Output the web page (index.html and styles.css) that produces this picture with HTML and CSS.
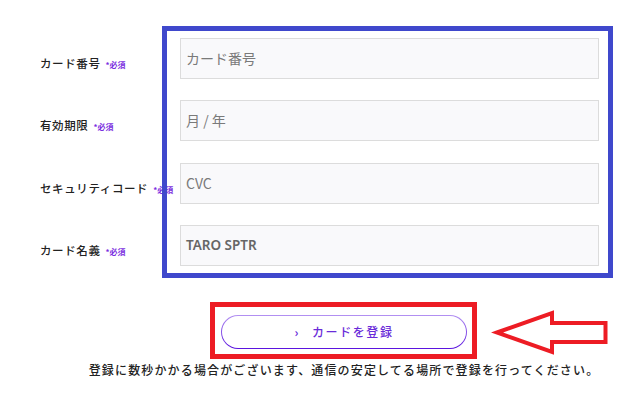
FILE: index.html
```html
<!DOCTYPE html>
<html lang="ja">
<head>
<meta charset="utf-8">
<link rel="stylesheet" href="styles.css">
</head>
<body>
<div class="page">
  <form class="card-form">
    <div class="row">
      <label class="label">カード番号<span class="req">*必須</span></label>
      <div class="field placeholder">カード番号</div>
    </div>
    <div class="row">
      <label class="label">有効期限<span class="req">*必須</span></label>
      <div class="field placeholder">月 / 年</div>
    </div>
    <div class="row">
      <label class="label">セキュリティコード<span class="req">*必須</span></label>
      <div class="field placeholder">CVC</div>
    </div>
    <div class="row">
      <label class="label">カード名義<span class="req">*必須</span></label>
      <div class="field value">TARO SPTR</div>
    </div>
  </form>
  <div class="actions">
    <button type="button" class="submit"><span class="chev">›</span>カードを登録</button>
    <p class="note">登録に数秒かかる場合がございます、通信の安定してる場所で登録を行ってください。</p>
  </div>
</div>
<div class="mark-blue"></div>
<div class="mark-red"></div>
<svg class="arrow" width="120" height="50" viewBox="490 306 120 50">
  <polygon points="497,332.5 552,313 552,323 605.5,323 605.5,342 552,342 552,352" fill="none" stroke="#ed1c24" stroke-width="4" stroke-linejoin="miter"/>
</svg>
</body>
</html>
```
FILE: styles.css
```css
html, body {
  margin: 0;
  padding: 0;
  background: #fff;
}
body {
  width: 640px;
  height: 404px;
  overflow: hidden;
  position: relative;
  font-family: "Noto Sans CJK JP", "Noto Sans", sans-serif;
  color: #222;
}
.page {
  padding-top: 38px;
}
.card-form {
  display: flex;
  flex-direction: column;
  gap: 21.3px;
  padding-left: 40px;
}
.row {
  display: flex;
  align-items: flex-start;
}
.label {
  width: 140px;
  font-size: 11.5px;
  font-weight: 500;
  letter-spacing: 0.6px;
  line-height: 16px;
  padding-top: 17px;
  white-space: nowrap;
  color: #222;
}
.req {
  color: #7b2ee0;
  font-size: 8px;
  letter-spacing: 0;
  margin-left: 5px;
  font-weight: 700;
}
.field {
  box-sizing: border-box;
  width: 419px;
  height: 41px;
  border: 1.5px solid #dcdcdc;
  background: #f9f9fb;
  padding-left: 5px;
  font-size: 14px;
  line-height: 38px;
}
.placeholder {
  color: #7a7a7a;
}
.value {
  color: #666;
  font-weight: 600;
  font-size: 13.5px;
  font-family: "Noto Sans", sans-serif;
}
.actions {
  padding-left: 48px;
  width: 592px;
  display: flex;
  flex-direction: column;
  align-items: center;
  padding-top: 49px;
}
.submit {
  box-sizing: border-box;
  width: 246px;
  height: 34px;
  border-radius: 17px;
  border: 1px solid transparent;
  background: linear-gradient(#fff, #fff) padding-box,
              linear-gradient(#b391f2, #5a12df) border-box;
  color: #6a2bd9;
  font-family: "Noto Sans CJK JP", sans-serif;
  font-size: 12px;
  letter-spacing: 1.6px;
  font-weight: 500;
  padding: 0;
  cursor: pointer;
}
.chev {
  margin-right: 12px;
  font-weight: 700;
}
.note {
  margin: 12px 0 0;
  font-size: 12px;
  font-weight: 500;
  letter-spacing: 1.15px;
  line-height: 18px;
  color: #222;
  white-space: nowrap;
}
.mark-blue {
  position: absolute;
  left: 162px;
  top: 26px;
  width: 451px;
  height: 252px;
  box-sizing: border-box;
  border: 5px solid #3f48cc;
}
.mark-red {
  position: absolute;
  left: 210px;
  top: 302px;
  width: 267px;
  height: 57px;
  box-sizing: border-box;
  border: 5px solid #ed1c24;
}
.arrow {
  position: absolute;
  left: 490px;
  top: 306px;
}
```
